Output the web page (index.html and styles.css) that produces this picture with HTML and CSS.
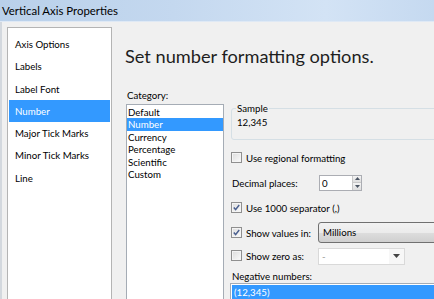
FILE: index.html
```html
<!DOCTYPE html>
<html>
    <head>
        <title>Vertical Axis Properties</title>
        <link rel="stylesheet" href="styles.css">
    </head>
<body>
    <div class="titlebar">Vertical Axis Properties</div>
    <div class="window">
        <ul class="nav">
            <li>Axis Options</li>
            <li>Labels</li>
            <li>Label Font</li>
            <li class="selected">Number</li>
            <li>Major Tick Marks</li>
            <li>Minor Tick Marks</li>
            <li>Line</li>
        </ul>

        <div class="page">
            <h1>Set number formatting options.</h1>
            <div class="columns">
                <div class="category">
                    <div class="label">Category:</div>
                    <ul class="listbox">
                        <li>Default</li>
                        <li class="selected">Number</li>
                        <li>Currency</li>
                        <li>Percentage</li>
                        <li>Scientific</li>
                        <li>Custom</li>
                    </ul>
                </div>

                <div class="options">
                    <fieldset class="sample">
                        <legend>Sample</legend>
                        <div class="sample-value">12,345</div>
                    </fieldset>

                    <div class="row">
                        <span class="check"></span>
                        <span>Use regional formatting</span>
                    </div>

                    <div class="row">
                        <span class="field-label">Decimal places:</span>
                        <div class="spinner">
                            <span class="spinner-value">0</span>
                            <span class="spin-buttons">
                                <span class="spin-btn"><svg width="5" height="3" viewBox="0 0 5 3"><path d="M0 3 L2.5 0 L5 3 Z" fill="#4b5563"/></svg></span>
                                <span class="spin-btn"><svg width="5" height="3" viewBox="0 0 5 3"><path d="M0 0 L2.5 3 L5 0 Z" fill="#4b5563"/></svg></span>
                            </span>
                        </div>
                    </div>

                    <div class="row">
                        <span class="check checked"><svg width="9" height="9" viewBox="0 0 9 9"><path d="M1.8 4.6 L3.6 6.6 L7.2 2" fill="none" stroke="#4a5f8f" stroke-width="1.5"/></svg></span>
                        <span>Use 1000 separator (,)</span>
                    </div>

                    <div class="row">
                        <span class="check checked"><svg width="9" height="9" viewBox="0 0 9 9"><path d="M1.8 4.6 L3.6 6.6 L7.2 2" fill="none" stroke="#4a5f8f" stroke-width="1.5"/></svg></span>
                        <span class="field-label short">Show values in:</span>
                        <div class="combo">Millions</div>
                    </div>

                    <div class="row small">
                        <span class="check"></span>
                        <span class="field-label short">Show zero as:</span>
                        <div class="combo disabled">
                            <span class="combo-text">-</span>
                            <span class="combo-arrow"><svg width="7" height="4" viewBox="0 0 7 4"><path d="M0 0 L7 0 L3.5 4 Z" fill="#444"/></svg></span>
                        </div>
                    </div>

                    <div class="label negative-label">Negative numbers:</div>
                    <ul class="listbox negative">
                        <li class="selected">(12,345)</li>
                    </ul>
                </div>
            </div>
        </div>
    </div>
</body>
</html>
```

FILE: styles.css
```css
* {
    padding: 0;
    margin: 0;
    box-sizing: border-box
}

html,
body {
    height: 100%;
    overflow: hidden
}

body {
    background-color: #f0f0f0;
    font-family: Lato, "Open Sans", sans-serif;
    font-size: 9.7px;
    color: #000
}

ul {
    list-style: none
}

.titlebar {
    height: 22px;
    line-height: 22px;
    padding-left: 2px;
    font-size: 11.4px;
    color: #000;
    background: linear-gradient(to right, #b9d0ea 0%, #c4d8ef 40%, #d3e3f5 75%, #c5d9f0 100%);
    border-bottom: 1px solid #dfe9f5
}

.window {
    display: flex;
    height: 277px;
    padding-top: 5px;
    padding-left: 5px;
    border-left: 2px solid #d3d8de
}

.nav {
    width: 105px;
    flex-shrink: 0;
    background-color: #fff;
    border: 1px solid #b4b4b4;
    border-bottom: none;
    padding-top: 5px;
    font-size: 9.7px
}

.nav li {
    height: 22.3px;
    line-height: 22.3px;
    padding-left: 6px;
    margin: 0 1px;
    color: #000
}

.nav li.selected {
    background-color: #3399ff;
    color: #fff
}

.page {
    flex: 1;
    padding-left: 13px;
    min-width: 0
}

.page h1 {
    font-size: 18.2px;
    font-weight: normal;
    line-height: 26px;
    color: #1e1e1e;
    margin-top: 16px;
    margin-bottom: 19px;
    white-space: nowrap
}

.columns {
    display: flex
}

.category {
    width: 99px;
    flex-shrink: 0;
    padding-left: 1px
}

.label {
    line-height: 14px;
    padding-left: 1px;
    margin-bottom: 2px
}

.listbox {
    background-color: #fff;
    border: 1px solid #a5acb5;
    padding-top: 1px;
    height: 200px
}

.listbox li {
    height: 12.4px;
    line-height: 12.4px;
    padding-left: 1px;
    white-space: nowrap
}

.listbox li.selected {
    background-color: #3399ff;
    color: #fff
}

.options {
    flex: 1;
    padding-left: 7px;
    padding-top: 13px;
    min-width: 0;
    margin-right: -40px
}

.sample {
    border: 1px solid #d5dfe5;
    border-radius: 3px;
    padding: 0 5px 10px 5px
}

.sample legend {
    line-height: 14px;
    padding: 0 1px;
    margin-left: -1px
}

.sample-value {
    line-height: 14px
}

.row {
    display: flex;
    align-items: center;
    height: 25px;
    white-space: nowrap
}

.row:nth-of-type(1) {
    margin-top: 5px
}

.row.small {
    height: 21px
}

.check {
    width: 11px;
    height: 11px;
    flex-shrink: 0;
    margin-right: 4px;
    border: 1px solid #8f8f8f;
    background: linear-gradient(135deg, #dcdcdc, #fbfbfb);
    box-shadow: inset 0 0 0 1px #f4f4f4;
    display: flex;
    align-items: center;
    justify-content: center
}

.field-label {
    width: 88px;
    flex-shrink: 0;
    padding-left: 1px
}

.field-label.short {
    width: 72px;
    padding-left: 0
}

.spinner {
    width: 43px;
    height: 16px;
    border: 1px solid #abadb3;
    background-color: #fff;
    display: flex;
    align-items: center
}

.spinner-value {
    flex: 1;
    padding-left: 2px
}

.spin-buttons {
    width: 9px;
    height: 100%;
    display: flex;
    flex-direction: column
}

.spin-btn {
    flex: 1;
    display: flex;
    align-items: center;
    justify-content: center;
    background: linear-gradient(#f4f4f4, #dedede);
    border-left: 1px solid #c8c8c8
}

.spin-btn + .spin-btn {
    border-top: 1px solid #c8c8c8
}

.combo {
    flex: 1;
    height: 21px;
    margin-top: -1px;
    line-height: 19px;
    padding-left: 4px;
    border: 1px solid #707070;
    border-radius: 3px;
    background: linear-gradient(#f2f2f2 0%, #ebebeb 50%, #dddddd 51%, #cfcfcf 100%)
}

.combo.disabled {
    flex: none;
    width: 87px;
    height: 17px;
    margin-top: 1px;
    line-height: 15px;
    border: 1px solid #d9d9d9;
    border-radius: 0;
    background: #fff;
    padding-left: 0;
    display: flex
}

.combo-text {
    flex: 1;
    color: #9a9a9a;
    padding-left: 3px
}

.combo-arrow {
    width: 15px;
    display: flex;
    align-items: center;
    justify-content: center;
    background-color: #f7f7f7
}

.negative-label {
    padding-top: 4px;
    line-height: 13px;
    margin-bottom: 0
}

.listbox.negative {
    height: 40px;
    margin-left: -1px;
    padding: 1px
}

.listbox.negative li {
    height: 14px;
    line-height: 14px;
    padding-left: 2px
}
```
